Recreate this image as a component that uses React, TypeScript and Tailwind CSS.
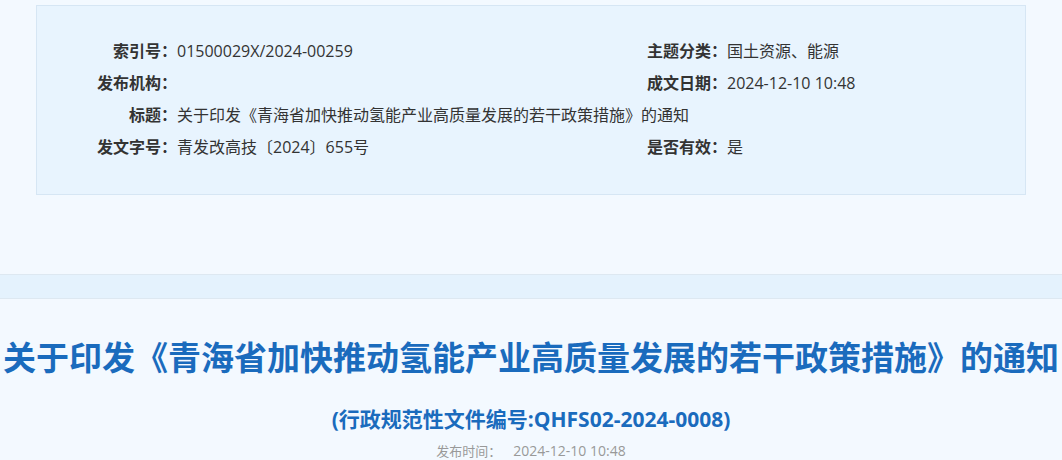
import React from 'react';

const font = { fontFamily: '"Open Sans", "Noto Sans CJK SC", "Noto Sans", sans-serif' };

function Field({ label, value, wide }: { label: string; value: string; wide?: boolean }) {
  return (
    <div className={wide ? 'col-span-2 flex whitespace-nowrap' : 'flex whitespace-nowrap'}>
      <span className="flex w-[80px] shrink-0 justify-end font-bold text-[#333]">{label}：</span>
      <span className="text-[#333]">{value}</span>
    </div>
  );
}

export default function App() {
  return (
    <div className="min-h-screen bg-[#f3f9ff]" style={font}>
      <div className="px-[36px] pt-[5px]">
        <div className="w-[990px] border border-[#d6e6f4] bg-[#e8f4fe] pl-[60px] pt-[29px] pb-[31px]">
          <div className="grid grid-cols-[550px_1fr] text-[16px] leading-[32px]">
            <Field label="索引号" value="01500029X/2024-00259" />
            <Field label="主题分类" value="国土资源、能源" />
            <Field label="发布机构" value="" />
            <Field label="成文日期" value="2024-12-10 10:48" />
            <Field label="标题" value="关于印发《青海省加快推动氢能产业高质量发展的若干政策措施》的通知" wide />
            <Field label="发文字号" value="青发改高技〔2024〕655号" />
            <Field label="是否有效" value="是" />
          </div>
        </div>
      </div>

      <div className="mt-[79px] h-[25px] border-y border-[#dde8f1] bg-[#e4f2fd]" />

      <h1 className="mt-[34px] whitespace-nowrap text-center text-[33px] font-bold leading-[50px] text-[#1a6bbd]">
        关于印发《青海省加快推动氢能产业高质量发展的若干政策措施》的通知
      </h1>
      <div className="mt-[21px] text-center text-[21px] font-bold leading-[30px] text-[#1a6bbd]">
        (行政规范性文件编号:QHFS02-2024-0008)
      </div>
      <div className="mt-[7px] text-center text-[13px] leading-[20px] text-[#999]">
        发布时间：<span className="ml-[12px] text-[14px]">2024-12-10 10:48</span>
      </div>
    </div>
  );
}
